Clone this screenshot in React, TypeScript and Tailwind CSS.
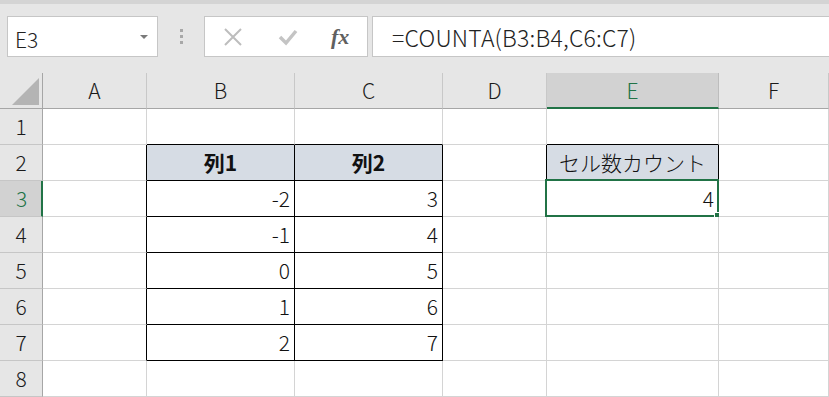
import React from 'react';

type Col = { label: string; w: string };

const cols: Col[] = [
  { label: 'A', w: 'w-[104px]' },
  { label: 'B', w: 'w-[148px]' },
  { label: 'C', w: 'w-[148px]' },
  { label: 'D', w: 'w-[104px]' },
  { label: 'E', w: 'w-[172px]' },
  { label: 'F', w: 'w-[110px]' },
  { label: '', w: 'w-[60px]' },
];

// row -> col -> value
const values: Record<number, Record<number, string>> = {
  2: { 1: '列1', 2: '列2', 4: 'セル数カウント' },
  3: { 1: '-2', 2: '3', 4: '4' },
  4: { 1: '-1', 2: '4' },
  5: { 1: '0', 2: '5' },
  6: { 1: '1', 2: '6' },
  7: { 1: '2', 2: '7' },
};

const rows = [1, 2, 3, 4, 5, 6, 7, 8];

const bordered = (r: number, c: number) =>
  (r >= 2 && r <= 7 && (c === 1 || c === 2)) || (r === 2 && c === 4);

const isHead = (r: number, c: number) => r === 2 && (c === 1 || c === 2 || c === 4);

const font = { fontFamily: '"Noto Sans CJK JP", "Noto Sans", sans-serif' };

function Toolbar() {
  return (
    <div className="flex items-start h-[69px] pt-3 pb-4">
      <div className="ml-[7px] w-[151px] h-[41px] bg-white border border-[#c6c6c6] flex items-center justify-between pl-[7px] pr-[9px]">
        <span className="text-[21px] text-[#222] leading-none pt-[5px]">E3</span>
        <div className="w-0 h-0 border-l-[4px] border-r-[4px] border-t-[4px] border-l-transparent border-r-transparent border-t-[#7a7a7a]" />
      </div>
      <div className="w-[46px] h-[41px] flex flex-col items-center justify-center gap-[3px] pl-[1px]">
        <div className="w-[3px] h-[3px] bg-[#a8a8a8]" />
        <div className="w-[3px] h-[3px] bg-[#a8a8a8]" />
        <div className="w-[3px] h-[3px] bg-[#a8a8a8]" />
      </div>
      <div className="w-[164px] h-[41px] bg-white border border-[#c6c6c6] flex items-center">
        <svg className="ml-[18px]" width="20" height="18" viewBox="0 0 20 18">
          <path d="M2 1 L18 17 M18 1 L2 17" stroke="#bdbdbd" strokeWidth="2" fill="none" />
        </svg>
        <svg className="ml-[35px]" width="20" height="18" viewBox="0 0 20 18">
          <path d="M2 9 L8 15 L18 3" stroke="#c4c4c4" strokeWidth="3.5" fill="none" />
        </svg>
        <span
          className="ml-[33px] italic font-bold text-[22px] text-[#606060] leading-none"
          style={{ fontFamily: '"Liberation Serif", serif' }}
        >
          fx
        </span>
      </div>
      <div className="ml-[4px] flex-1 h-[41px] bg-white border border-[#c6c6c6] border-r-0 flex items-center pl-[19px]">
        <span className="text-[23px] text-[#222] leading-none pt-[1px] tracking-[0.2px]">=COUNTA(B3:B4,C6:C7)</span>
      </div>
    </div>
  );
}

function HeaderRow() {
  return (
    <div className="flex h-[36px]">
      <div className="w-[43px] shrink-0 border-r border-b border-r-[#a6a6a6] border-b-[#a6a6a6] flex items-end justify-end pr-[3px] pb-[3px]">
        <svg width="27" height="27" viewBox="0 0 27 27">
          <polygon points="0,27 27,0 27,27" fill="#b4b4b4" />
        </svg>
      </div>
      {cols.map((c, i) =>
        c.label === 'E' ? (
          <div
            key={i}
            className={`${c.w} shrink-0 bg-[#d2d2d2] border-r border-r-[#bdbdbd] border-b-2 border-b-[#217346] flex items-center justify-center text-[21px] text-[#217346] pt-[1px]`}
          >
            {c.label}
          </div>
        ) : (
          <div
            key={i}
            className={`${c.w} shrink-0 border-r border-r-[#c8c8c8] border-b border-b-[#a6a6a6] flex items-center justify-center text-[21px] text-[#1a1a1a]`}
          >
            {c.label}
          </div>
        )
      )}
    </div>
  );
}

function Row({ r }: { r: number }) {
  const active = r === 3;
  return (
    <div className="flex h-[36px]">
      <div
        className={
          active
            ? 'w-[43px] shrink-0 bg-[#d2d2d2] border-r-2 border-r-[#217346] border-b border-b-[#c6c6c6] flex items-center justify-center text-[21px] text-[#217346] pl-[2px]'
            : 'w-[43px] shrink-0 border-r border-r-[#a6a6a6] border-b border-b-[#c6c6c6] flex items-center justify-center text-[21px] text-[#1a1a1a]'
        }
      >
        {r}
      </div>
      {cols.map((c, i) => {
        const right = bordered(r, i) || bordered(r, i + 1) ? 'border-r-black' : 'border-r-[#d4d4d4]';
        const bottom = bordered(r, i) || bordered(r + 1, i) ? 'border-b-black' : 'border-b-[#d4d4d4]';
        const v = values[r]?.[i];
        const head = isHead(r, i);
        const selected = r === 3 && i === 4;
        return (
          <div
            key={i}
            className={`${c.w} shrink-0 relative border-r border-b ${right} ${bottom} ${
              head ? 'bg-[#d6dce4] justify-center' : 'bg-white justify-end pr-[4px]'
            } flex items-center text-[21px] text-[#111] pt-[1px]`}
          >
            {head && i !== 4 ? <span className="font-bold">{v}</span> : <span className="font-light">{v}</span>}
            {selected && (
              <>
                <div className="absolute -left-[2px] -top-[2px] -right-[1px] -bottom-[1px] border-2 border-[#217346]" />
                <div className="absolute -right-[3px] -bottom-[3px] w-[7px] h-[7px] bg-[#217346] border-l border-t border-white" />
              </>
            )}
          </div>
        );
      })}
    </div>
  );
}

export default function App() {
  return (
    <div className="w-[829px] h-[397px] overflow-hidden bg-[#e6e6e6] font-light" style={font}>
      <div className="h-[4px] bg-[#d4d4d4]" />
      <Toolbar />
      <HeaderRow />
      {rows.map((r) => (
        <Row key={r} r={r} />
      ))}
    </div>
  );
}
